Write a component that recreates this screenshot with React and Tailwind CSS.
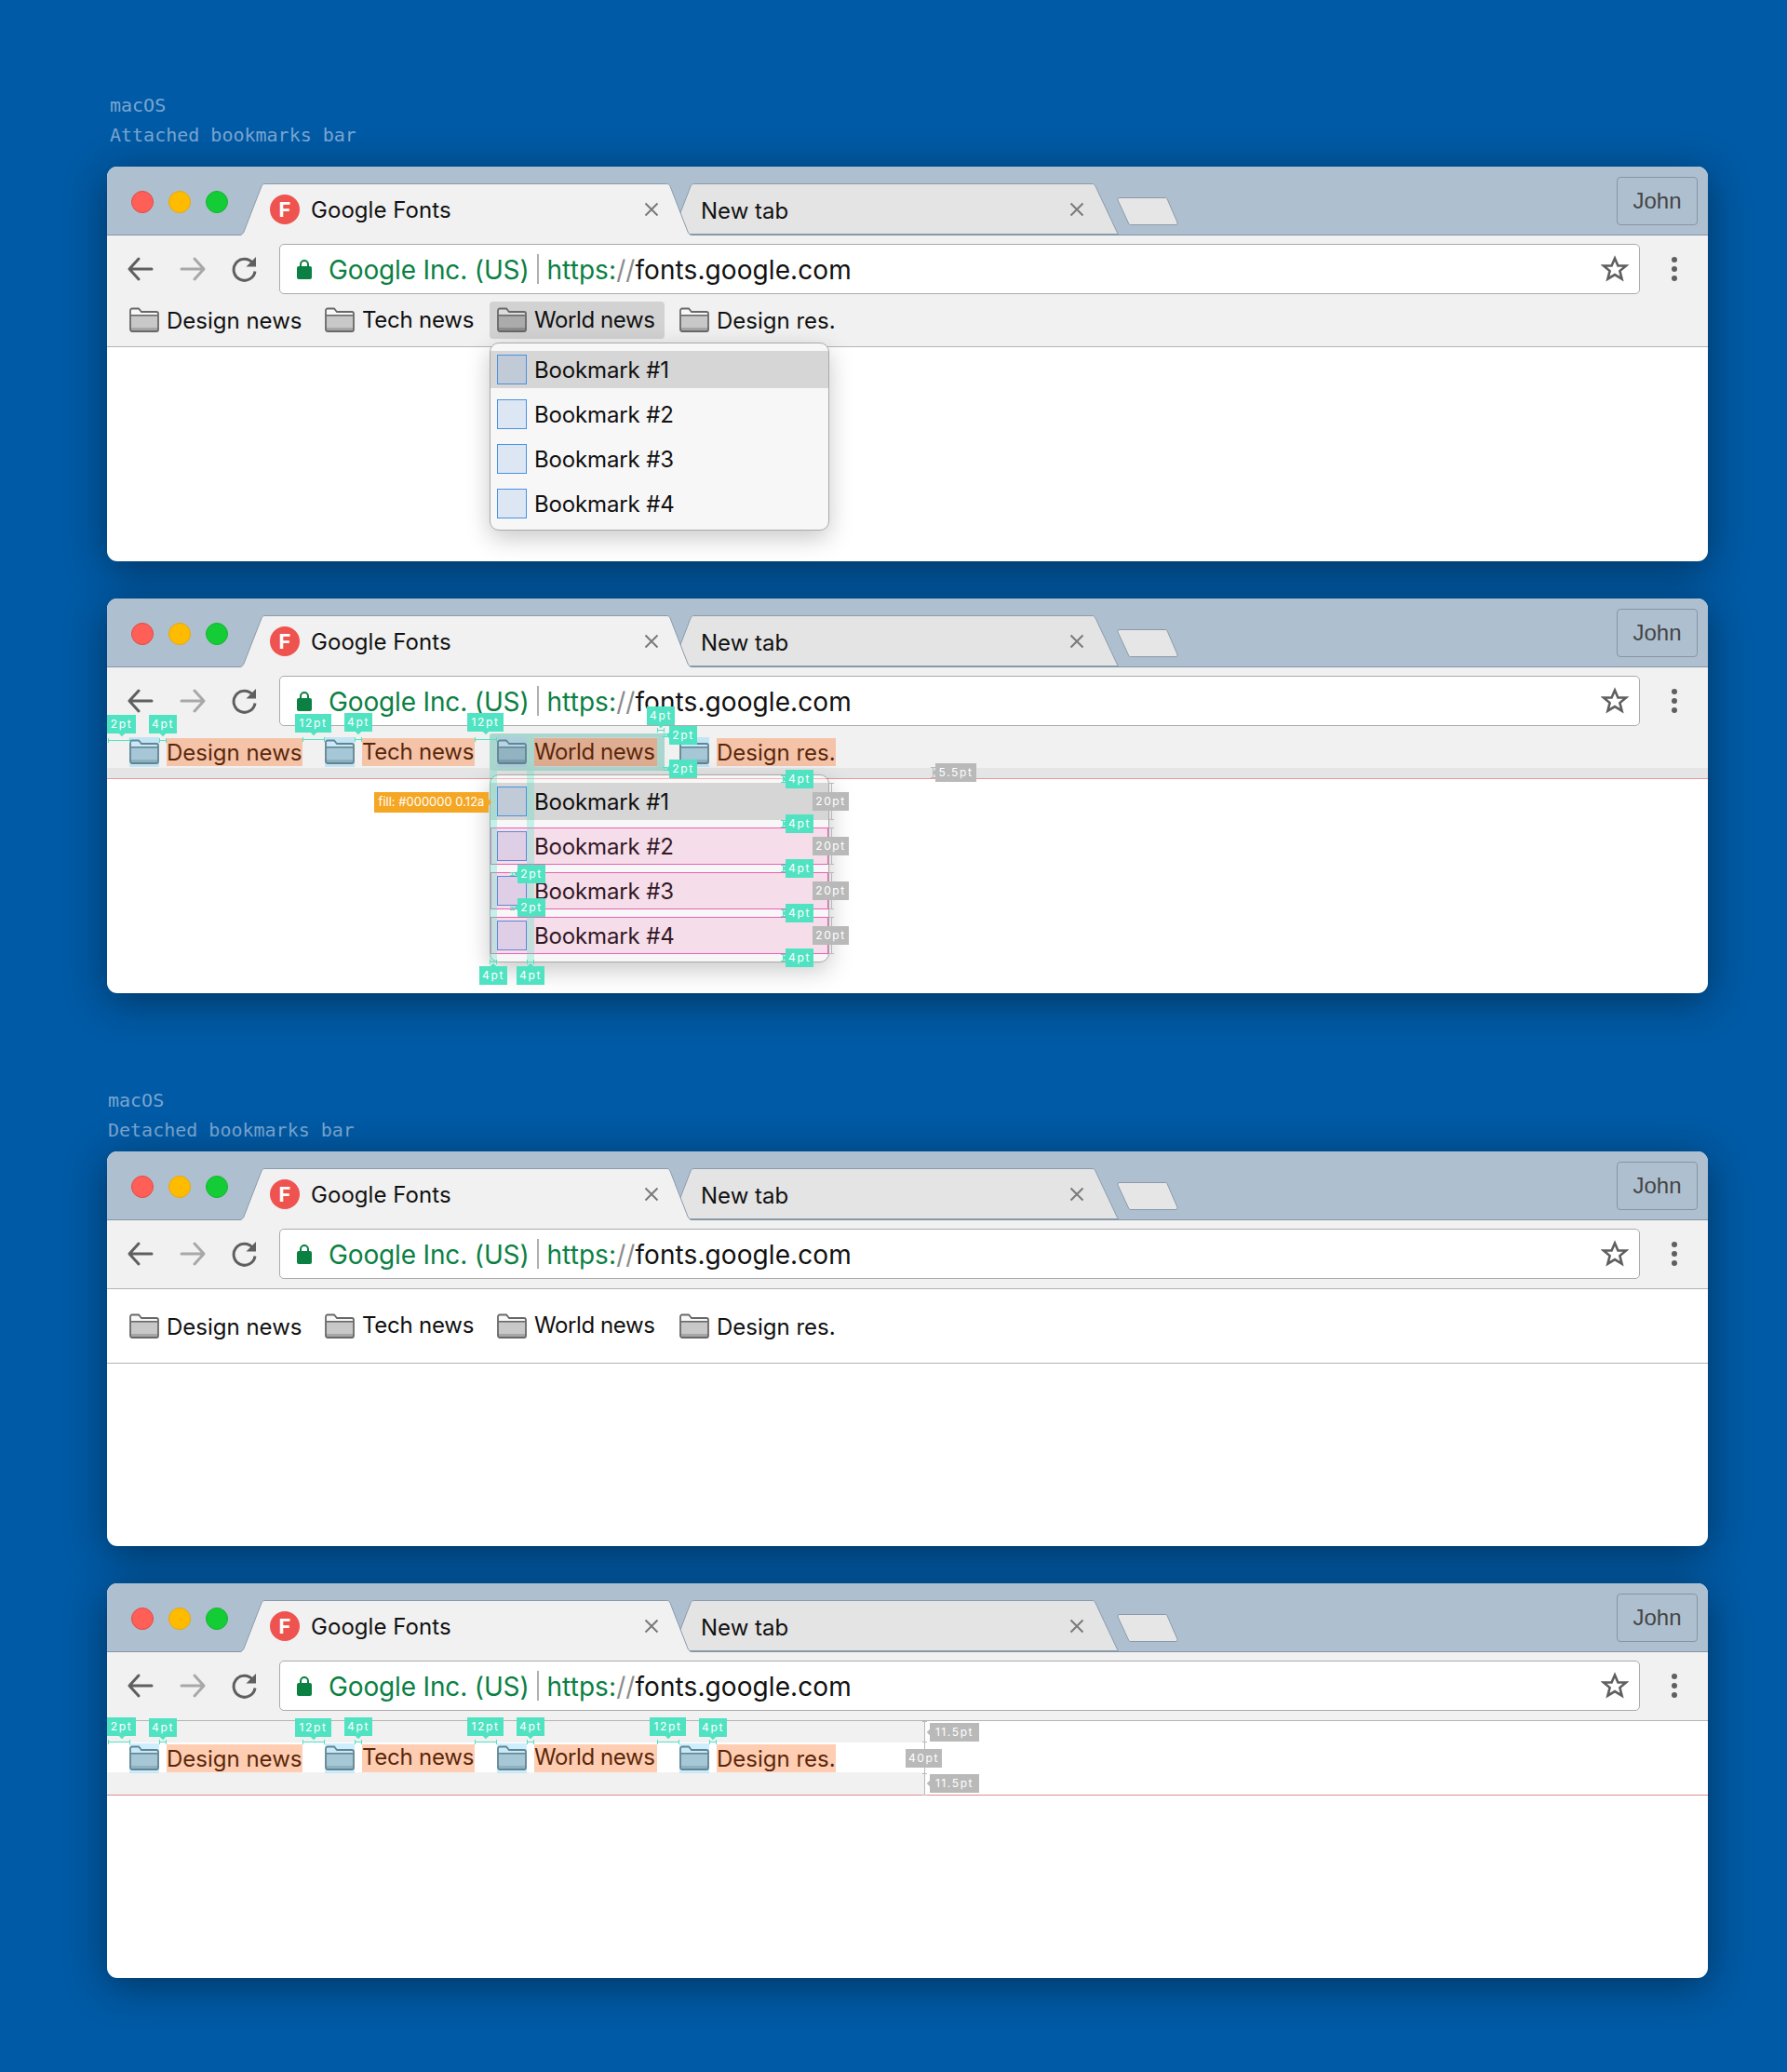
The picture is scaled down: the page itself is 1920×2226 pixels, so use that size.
import React from "react";

const UI = "font-['Inter','Liberation_Sans',sans-serif]";

function Folder({ dark }) {
  return (
    <svg width="32" height="32" viewBox="0 0 32 32" className="block">
      <path d="M1 26V5.500A2 2 0 0 1 3 3.500h7l3 3.500h16a2 2 0 0 1 2 2V26a2 2 0 0 1-2 2H3a2 2 0 0 1-2-2z" fill={dark ? "#dcdcdc" : "#f8f8f8"} />
      <rect x="1" y="11" width="30" height="16" fill={dark ? "#ababab" : "#c8c8c8"} />
      <rect x="1" y="24" width="30" height="3.500" fill={dark ? "#8c8c8c" : "#a6a6a6"} />
      <path d="M1.500 10.800h29" fill="none" stroke="#6a6a6a" strokeWidth="1.600" />
      <path d="M1 26V5.500A2 2 0 0 1 3 3.500h7l3 3.500h16a2 2 0 0 1 2 2V26a2 2 0 0 1-2 2H3a2 2 0 0 1-2-2z" fill="none" stroke="#686868" strokeWidth="1.800" />
    </svg>
  );
}

function Bookmark({ label, width, shift, active, marked }) {
  return (
    <div className={`flex h-[40px] items-center gap-2 rounded-[4px] px-2 ${active ? "bg-[#d2d2d2]" : ""}`}>
      <div className="relative h-[32px] w-[32px]">
        <Folder dark={active} />
        {marked && <div className="absolute inset-0 bg-[#5ac8fa]/30" />}
      </div>
      <div className={`relative flex h-[30px] items-center text-[24px] leading-[30px] whitespace-nowrap text-[#111] ${width} ${shift}`}>
        {label}
        {marked && <div className="absolute inset-x-0 inset-y-0 bg-[#ff5800]/30" />}
      </div>
    </div>
  );
}

function Bookmarks({ marked, activeWorld }) {
  return (
    <div className="relative z-[1] flex items-center gap-2 pl-[16px]">
      <Bookmark label="Design news" width="w-[146px]" shift="pt-[2px]" marked={marked} />
      <Bookmark label="Tech news" width="w-[121px] tracking-[-0.25px]" shift="pb-[1px]" marked={marked} />
      <Bookmark label="World news" width="w-[132px] tracking-[-0.4px]" shift="pb-[1px]" marked={marked} active={activeWorld} />
      <Bookmark label="Design res." width="w-[128px]" shift="pt-[2px]" marked={marked} />
    </div>
  );
}

function MenuItem({ n, hover, marked }) {
  return (
    <div className={`relative flex h-[40px] items-center gap-[9px] pl-[7px] ${hover ? "bg-[#d6d6d6]" : ""}`}>
      <div className="h-[32px] w-[32px] border border-[#4a90e2] bg-[#4a90e2]/15" />
      <span className="-ml-[1px] pt-[2px] text-[24px] tracking-[-0.15px] text-[#111]">Bookmark #{n}</span>
      {marked && <div className="absolute inset-0 border border-[#ec60b8] bg-[#ec4899]/15" />}
    </div>
  );
}

function Menu({ marked }) {
  return (
    <div className="absolute top-[189px] left-[411px] z-10 flex w-[365px] flex-col gap-2 rounded-[10px] border border-[#aaaaaa] bg-[#f7f7f7] py-2 shadow-[0_8px_26px_rgba(0,0,0,0.22)]">
      <MenuItem n={1} hover />
      <MenuItem n={2} marked={marked} />
      <MenuItem n={3} marked={marked} />
      <MenuItem n={4} marked={marked} />
    </div>
  );
}

function CloseX() {
  return (
    <svg width="16" height="16" viewBox="0 0 16 16" className="block">
      <path d="M1.500 1.500l13 13M14.500 1.500l-13 13" stroke="#7a7a7a" strokeWidth="2" />
    </svg>
  );
}

function TabShape({ w, fill, h = 56, closed }) {
  const d = closed
    ? `M0.5 ${h - 1}C6 ${h - 1} 6 ${h - 3} 7 ${h - 5}L25 3C26 1 27 0.5 29 0.5H${w - 29}C${w - 27} 0.5 ${w - 26} 1 ${w - 25} 3L${w - 2} ${h - 3}C${w - 1.5} ${h - 2} ${w - 1} ${h - 1} ${w - 0.5} ${h - 0.5}H0.5Z`
    : `M0.5 ${h}C3 ${h - 1} 4 ${h - 2} 5 ${h - 4}L24 3C25 1 26 0.5 28 0.5H${w - 28}C${w - 26} 0.5 ${w - 25} 1 ${w - 24} 3L${w - 5} ${h - 4}C${w - 4} ${h - 2} ${w - 3} ${h - 1} ${w - 0.5} ${h}`;
  return (
    <svg width={w} height={h} viewBox={`0 0 ${w} ${h}`} className="absolute inset-0 block">
      <path d={d} fill={fill} stroke="#8a9aaa" strokeWidth="1" />
    </svg>
  );
}

function TabStrip() {
  return (
    <div className="flex h-[74px] items-end border-b border-[#8596a6] bg-[#aec0cf]">
      <div className="mr-[12px] ml-[26px] flex gap-4 self-start pt-[26px]">
        <div className="h-[24px] w-[24px] rounded-full border border-[#e04a45] bg-[#ff5f57]" />
        <div className="h-[24px] w-[24px] rounded-full border border-[#e6a812] bg-[#ffbb00]" />
        <div className="h-[24px] w-[24px] rounded-full border border-[#12b62f] bg-[#14cc36]" />
      </div>
      <div className="relative z-[2] -mb-px flex h-[56px] w-[487px] items-center pr-[36px] pl-[33px]">
        <TabShape w={487} fill="#f1f1f1" />
        <div className="relative flex h-[32px] w-[32px] items-center justify-center rounded-full bg-[#ef5350] text-[22px] leading-none font-bold text-white">F</div>
        <span className="relative ml-[12px] pt-[2px] text-[24px] tracking-[0.05px] text-[#111]">Google Fonts</span>
        <div className="relative ml-auto"><CloseX /></div>
      </div>
      <div className="relative z-[1] -ml-[27px] flex h-[55px] w-[485px] items-center pr-[37px] pl-[36px]">
        <TabShape w={485} h={55} fill="#e4e4e4" closed />
        <span className="relative pt-[5px] text-[24px] text-[#111]">New tab</span>
        <div className="relative ml-auto"><CloseX /></div>
      </div>
      <div className="relative -ml-[2px] mb-[10px] h-[30px] w-[66px]">
        <svg width="66" height="30" viewBox="0 0 66 30" className="block">
          <path d="M1 3C0.5 1.5 1.500 0.5 3 0.5H52C53 0.5 53.800 1 54.200 2L65 27C65.500 28.500 64.800 29.500 63 29.500H15C13.800 29.500 13 29 12.600 28Z" fill="#e6e6e6" stroke="#8a9aaa" />
        </svg>
      </div>
      <div className="mt-[11px] mr-[11px] ml-auto flex h-[52px] w-[87px] items-center justify-center self-start rounded-[4px] border border-[#8694a3] font-['Liberation_Sans',sans-serif] text-[24px] text-[#444444]">John</div>
    </div>
  );
}

function Address() {
  return (
    <div className="flex h-[54px] w-[1462px] items-center rounded-[5px] border border-[#aaaaaa] bg-white pr-[11px] pl-[18px] text-[28px] tracking-[0.08px]">
      <svg width="16" height="22" viewBox="0 0 16 22" className="block">
        <path d="M4 9V6a4 4 0 0 1 8 0v3" fill="none" stroke="#0b8043" strokeWidth="2" />
        <rect x="0" y="8" width="16" height="14" rx="2" fill="#0b8043" />
      </svg>
      <span className="ml-[18px] pt-[2px] tracking-[-0.15px] text-[#0b8043]">Google Inc. (US)</span>
      <div className="mr-[8px] ml-[9px] h-[32px] w-[2px] bg-[#b0b0b0]" />
      <span className="pt-[2px] text-[#0b8043]">https:</span>
      <span className="pt-[2px] text-[#8a8a8a]">//</span>
      <span className="pt-[2px] text-[#111]">fonts.google.com</span>
      <svg width="30" height="30" viewBox="0 0 30 30" className="ml-auto block">
        <path d="M15 3.500l3.400 8h8.600l-6.600 5.600 2.200 8.600L15 21.100l-7.600 4.600 2.200-8.600L3 11.500h8.600z" fill="none" stroke="#5f5f5f" strokeWidth="2.600" strokeLinejoin="miter" />
      </svg>
    </div>
  );
}

function Toolbar({ detached }) {
  return (
    <div className={`flex items-start bg-[#f1f1f1] pt-[9px] ${detached ? "h-[74px] border-b border-[#b4b4b4]" : "h-[64px]"}`}>
      <div className="flex h-[54px] items-center gap-[24px] pl-[20px]">
        <svg width="32" height="32" viewBox="0 0 32 32" className="block"><path d="M28 16H5M14 5L4 16l10 11" fill="none" stroke="#5f5f5f" strokeWidth="3" strokeLinecap="round" strokeLinejoin="round" /></svg>
        <svg width="32" height="32" viewBox="0 0 32 32" className="block"><path d="M4 16h23M18 5l10 11-10 11" fill="none" stroke="#a8a8a8" strokeWidth="3" strokeLinecap="round" strokeLinejoin="round" /></svg>
        <svg width="32" height="32" viewBox="0 0 32 32" className="block">
          <path d="M24.500 9.500A11.500 11.500 0 1 0 27 18.500" fill="none" stroke="#5f5f5f" strokeWidth="3" />
          <path d="M28 3v10.500H17.500z" fill="#5f5f5f" />
        </svg>
      </div>
      <div className="ml-[21px]"><Address /></div>
      <div className="flex h-[54px] flex-1 flex-col items-center justify-center gap-1">
        <div className="h-[6px] w-[6px] rounded-full bg-[#5f5f5f]" />
        <div className="h-[6px] w-[6px] rounded-full bg-[#5f5f5f]" />
        <div className="h-[6px] w-[6px] rounded-full bg-[#5f5f5f]" />
      </div>
    </div>
  );
}

function Window({ children }) {
  return (
    <div className={`relative ml-[115px] h-[424px] w-[1720px] overflow-hidden rounded-[11px] bg-white shadow-[0_8px_44px_rgba(0,0,0,0.42)] ${UI}`}>
      <TabStrip />
      {children}
    </div>
  );
}

function Label({ c, t, a, gray, orange }) {
  const color = orange ? "bg-[#f5a623]" : gray ? "bg-[#b9b9b9]" : "bg-[#50e3c2]";
  const tip = a === "down" ? "-bottom-[2px] left-1/2 -ml-[3px]" : a === "left" ? "top-1/2 -left-[2px] -mt-[3px]" : a === "up" ? "-top-[2px] left-1/2 -ml-[3px]" : a === "right" ? "top-1/2 -right-[2px] -mt-[3px]" : "hidden";
  return (
    <div className={`absolute flex items-center justify-center whitespace-nowrap text-white ${color} ${orange ? "h-[22px] text-[13px]" : "h-[20px] text-[12px] tracking-[1.6px]"} ${c}`}>
      <span className={`absolute h-[6px] w-[6px] rotate-45 bg-inherit ${tip}`} />
      <span className="relative">{t}</span>
    </div>
  );
}

function TickH({ c, gray }) {
  const col = gray ? "border-[#b9b9b9]" : "border-[#50e3c2]";
  return (
    <div className={`absolute h-[5px] border-x ${col} ${c}`}>
      <div className={`mt-[2px] h-0 border-t ${col}`} />
    </div>
  );
}

function TickV({ c, gray }) {
  const col = gray ? "border-[#b9b9b9]" : "border-[#50e3c2]";
  return (
    <div className={`absolute w-[5px] border-y ${col} ${c}`}>
      <div className={`ml-[2px] h-full w-0 border-l ${col}`} />
    </div>
  );
}

function Band({ c }) {
  return <div className={`absolute bg-[#50e3c2]/30 ${c}`} />;
}

function AttachedBar({ annotated }) {
  return (
    <div className={`relative h-[56px] border-b bg-[#f1f1f1] pt-[7px] ${annotated ? "border-[#e69a9a]" : "border-[#b4b4b4]"}`}>
      {annotated && <div className="absolute inset-x-0 top-[44px] h-[11px] bg-[#e5e5e5]" />}
      <Bookmarks activeWorld marked={annotated} />
    </div>
  );
}

function OverlayAttached() {
  return (
    <div className="pointer-events-none absolute inset-0 z-20">
      <div className="absolute top-[193px] left-[411px] h-[1px] w-[365px] bg-[#f05050]/40" />
      <Band c="top-[145px] left-[411px] h-[245px] w-[8px]" />
      <Band c="top-[145px] left-[451px] h-[245px] w-[8px]" />
      <Band c="top-[145px] left-[591px] h-[40px] w-[8px]" />
      <Band c="top-[145px] left-[419px] h-[4px] w-[32px]" />
      <Band c="top-[145px] left-[459px] h-[4px] w-[132px]" />
      <Band c="top-[181px] left-[419px] h-[4px] w-[32px]" />
      <Band c="top-[181px] left-[459px] h-[4px] w-[132px]" />

      <TickH c="top-[150px] left-[1px] w-[24px]" />
      <TickH c="top-[150px] left-[56px] w-[8px]" />
      <TickH c="top-[149px] left-[210px] w-[24px]" />
      <TickH c="top-[149px] left-[266px] w-[8px]" />
      <TickH c="top-[149px] left-[395px] w-[24px]" />
      <TickH c="top-[139px] left-[591px] w-[8px]" />
      <TickV c="top-[145px] left-[597px] h-[4px]" />
      <TickV c="top-[181px] left-[597px] h-[4px]" />
      <TickV gray c="top-[181px] left-[885px] h-[12px]" />
      <TickV c="top-[190px] left-[724px] h-[8px]" />
      <TickV c="top-[238px] left-[724px] h-[8px]" />
      <TickV c="top-[286px] left-[724px] h-[8px]" />
      <TickV c="top-[334px] left-[724px] h-[8px]" />
      <TickV c="top-[382px] left-[724px] h-[8px]" />
      <TickV gray c="top-[198px] left-[776px] h-[40px]" />
      <TickV gray c="top-[246px] left-[776px] h-[40px]" />
      <TickV gray c="top-[294px] left-[776px] h-[40px]" />
      <TickV gray c="top-[342px] left-[776px] h-[40px]" />
      <TickV c="top-[294px] left-[433px] h-[4px]" />
      <TickV c="top-[331px] left-[433px] h-[4px]" />
      <TickH c="top-[388px] left-[411px] w-[8px]" />
      <TickH c="top-[388px] left-[451px] w-[8px]" />

      <Label t="2pt" a="down" c="top-[125px] left-[0px] w-[31px]" />
      <Label t="4pt" a="down" c="top-[125px] left-[45px] w-[30px]" />
      <Label t="12pt" a="down" c="top-[124px] left-[202px] w-[39px]" />
      <Label t="4pt" a="down" c="top-[123px] left-[255px] w-[30px]" />
      <Label t="12pt" a="down" c="top-[123px] left-[387px] w-[39px]" />
      <Label t="4pt" a="down" c="top-[116px] left-[580px] w-[30px]" />
      <Label t="2pt" a="left" c="top-[137px] left-[604px] w-[30px]" />
      <Label t="2pt" a="left" c="top-[173px] left-[604px] w-[30px]" />
      <Label t="5.5pt" a="left" gray c="top-[177px] left-[890px] w-[44px]" />
      <Label t="4pt" a="left" c="top-[184px] left-[729px] w-[30px]" />
      <Label t="4pt" a="left" c="top-[232px] left-[729px] w-[30px]" />
      <Label t="4pt" a="left" c="top-[280px] left-[729px] w-[30px]" />
      <Label t="4pt" a="left" c="top-[328px] left-[729px] w-[30px]" />
      <Label t="4pt" a="left" c="top-[376px] left-[729px] w-[30px]" />
      <Label t="20pt" gray c="top-[208px] left-[758px] w-[39px]" />
      <Label t="20pt" gray c="top-[256px] left-[758px] w-[39px]" />
      <Label t="20pt" gray c="top-[304px] left-[758px] w-[39px]" />
      <Label t="20pt" gray c="top-[352px] left-[758px] w-[39px]" />
      <Label t="2pt" a="left" c="top-[286px] left-[441px] w-[30px]" />
      <Label t="2pt" a="left" c="top-[322px] left-[441px] w-[30px]" />
      <Label t="4pt" a="up" c="top-[395px] left-[400px] w-[30px]" />
      <Label t="4pt" a="up" c="top-[395px] left-[440px] w-[30px]" />
      <Label t="fill: #000000 0.12a" a="right" orange c="top-[208px] left-[287px] w-[123px]" />
    </div>
  );
}

function DetachedBar({ annotated }) {
  return (
    <div className={`relative flex h-[80px] items-center border-b bg-white ${annotated ? "border-[#e08e8e]" : "border-[#b4b4b4]"}`}>
      {annotated && <div className="absolute top-0 left-0 h-[23px] w-[878px] bg-[#f1f1f1]" />}
      {annotated && <div className="absolute top-[55px] left-0 h-[24px] w-[878px] bg-[#f1f1f1]" />}
      <Bookmarks marked={annotated} />
    </div>
  );
}

function OverlayDetached() {
  return (
    <div className="pointer-events-none absolute inset-0 z-20">
      <TickH c="top-[168px] left-[1px] w-[24px]" />
      <TickH c="top-[168px] left-[56px] w-[8px]" />
      <TickH c="top-[168px] left-[210px] w-[24px]" />
      <TickH c="top-[168px] left-[266px] w-[8px]" />
      <TickH c="top-[168px] left-[395px] w-[24px]" />
      <TickH c="top-[168px] left-[451px] w-[8px]" />
      <TickH c="top-[168px] left-[591px] w-[24px]" />
      <TickH c="top-[168px] left-[647px] w-[8px]" />
      <TickV gray c="top-[148px] left-[876px] h-[23px]" />
      <TickV gray c="top-[204px] left-[876px] h-[24px]" />
      <div className="absolute top-[171px] left-[878px] h-[33px] w-[1px] bg-[#b9b9b9]" />

      <Label t="2pt" a="down" c="top-[144px] left-[0px] w-[31px]" />
      <Label t="4pt" a="down" c="top-[145px] left-[45px] w-[30px]" />
      <Label t="12pt" a="down" c="top-[145px] left-[202px] w-[39px]" />
      <Label t="4pt" a="down" c="top-[144px] left-[255px] w-[30px]" />
      <Label t="12pt" a="down" c="top-[144px] left-[387px] w-[39px]" />
      <Label t="4pt" a="down" c="top-[144px] left-[440px] w-[30px]" />
      <Label t="12pt" a="down" c="top-[144px] left-[583px] w-[39px]" />
      <Label t="4pt" a="down" c="top-[145px] left-[636px] w-[30px]" />
      <Label t="11.5pt" a="left" gray c="top-[150px] left-[884px] w-[53px]" />
      <Label t="40pt" gray c="top-[178px] left-[858px] w-[39px]" />
      <Label t="11.5pt" a="left" gray c="top-[205px] left-[884px] w-[53px]" />
    </div>
  );
}

function Heading({ sub, c }) {
  return (
    <div className={`font-['DejaVu_Sans_Mono',monospace] text-[20px] leading-[32px] text-[#7aa6d2] ${c}`}>
      <div>macOS</div>
      <div>{sub}</div>
    </div>
  );
}

export default function App() {
  return (
    <div className="h-[2226px] w-[1920px] overflow-hidden bg-[#005aa5] pt-[97px]">
      <Heading sub="Attached bookmarks bar" c="mb-[18px] ml-[118px]" />
      <Window>
        <Toolbar />
        <AttachedBar />
        <Menu />
      </Window>
      <div className="mt-[40px]">
        <Window>
          <Toolbar />
          <AttachedBar annotated />
          <Menu marked />
          <OverlayAttached />
        </Window>
      </div>
      <Heading sub="Detached bookmarks bar" c="mt-[99px] mb-[7px] ml-[116px]" />
      <Window>
        <Toolbar detached />
        <DetachedBar />
      </Window>
      <div className="mt-[40px]">
        <Window>
          <Toolbar detached />
          <DetachedBar annotated />
          <OverlayDetached />
        </Window>
      </div>
    </div>
  );
}
